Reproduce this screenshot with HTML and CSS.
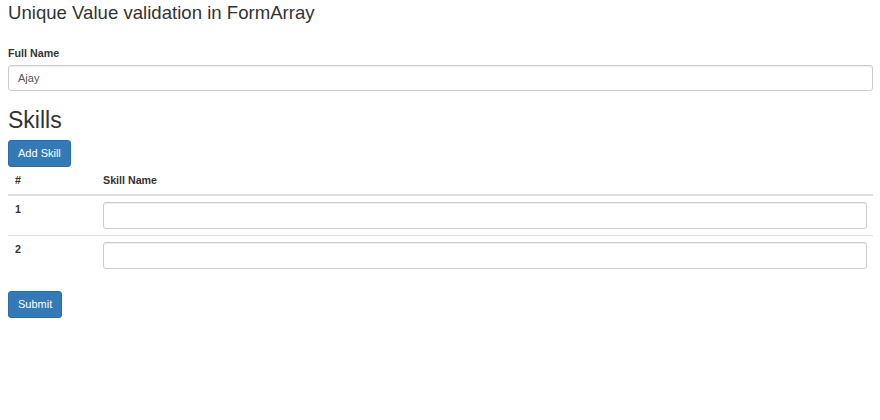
FILE: index.html
```html
<!DOCTYPE html>
<html>
<head>
<meta charset="utf-8">
<link rel="stylesheet" href="styles.css">
</head>
<body>
<div class="page">
  <h3 class="title">Unique Value validation in FormArray</h3>
  <form class="form">
    <div class="group">
      <label class="label">Full Name</label>
      <input class="control" type="text" value="Ajay">
    </div>
    <h2 class="section">Skills</h2>
    <button type="button" class="btn">Add Skill</button>
    <table class="table">
      <thead>
        <tr><th class="col-num">#</th><th>Skill Name</th></tr>
      </thead>
      <tbody>
        <tr><td class="num">1</td><td><input class="control" type="text"></td></tr>
        <tr><td class="num">2</td><td><input class="control" type="text"></td></tr>
      </tbody>
    </table>
    <button type="submit" class="btn">Submit</button>
  </form>
</div>
</body>
</html>
```

FILE: styles.css
```css
* { box-sizing: border-box; }
html, body { margin: 0; padding: 0; background: #fff; }
body {
  font-family: "Liberation Sans", Arial, sans-serif;
  font-size: 11px;
  line-height: 15px;
  color: #333;
}
.page { padding: 0 7px 0 8px; }
.title {
  margin: 2px 0 0 0;
  font-size: 18.6px;
  line-height: 21px;
  font-weight: normal;
  color: #333;
}
.form { margin-top: 23px; }
.label {
  display: block;
  font-weight: bold;
  font-size: 10.7px;
  line-height: 15px;
  margin-bottom: 4px;
}
.control {
  display: block;
  width: 100%;
  height: 26px;
  padding: 0 9px;
  border: 1px solid #ccc;
  border-radius: 3px;
  box-shadow: inset 0 1px 1px rgba(0,0,0,.075);
  font-family: "Liberation Sans", Arial, sans-serif;
  font-size: 11px;
  color: #555;
  background: #fff;
  outline: none;
}
.table .control { height: 27px; }
.section {
  margin: 16px 0 7px 0;
  font-size: 23px;
  line-height: 26px;
  font-weight: normal;
}
.btn {
  display: block;
  height: 27px;
  padding: 0 9px;
  border: 1px solid #2e6da4;
  border-radius: 3px;
  background: #337ab7;
  color: #fff;
  font-family: "Liberation Sans", Arial, sans-serif;
  font-size: 11px;
  line-height: 15px;
}
.table {
  width: 100%;
  border-collapse: collapse;
  border-spacing: 0;
  margin-bottom: 16px;
}
.table th {
  text-align: left;
  font-weight: bold;
  font-size: 10.7px;
  padding: 6px;
  line-height: 15px;
  border-bottom: 2px solid #ddd;
  vertical-align: bottom;
}
.table th.col-num { width: 89px; padding-left: 7px; }
.table td {
  padding: 6px;
  line-height: 15px;
  vertical-align: top;
  border-top: 1px solid #ddd;
}
.table td.num { padding-left: 7px; }
.table tbody tr:first-child td { border-top: 0; }
.table td.num { font-weight: bold; font-size: 10.7px; }
```
